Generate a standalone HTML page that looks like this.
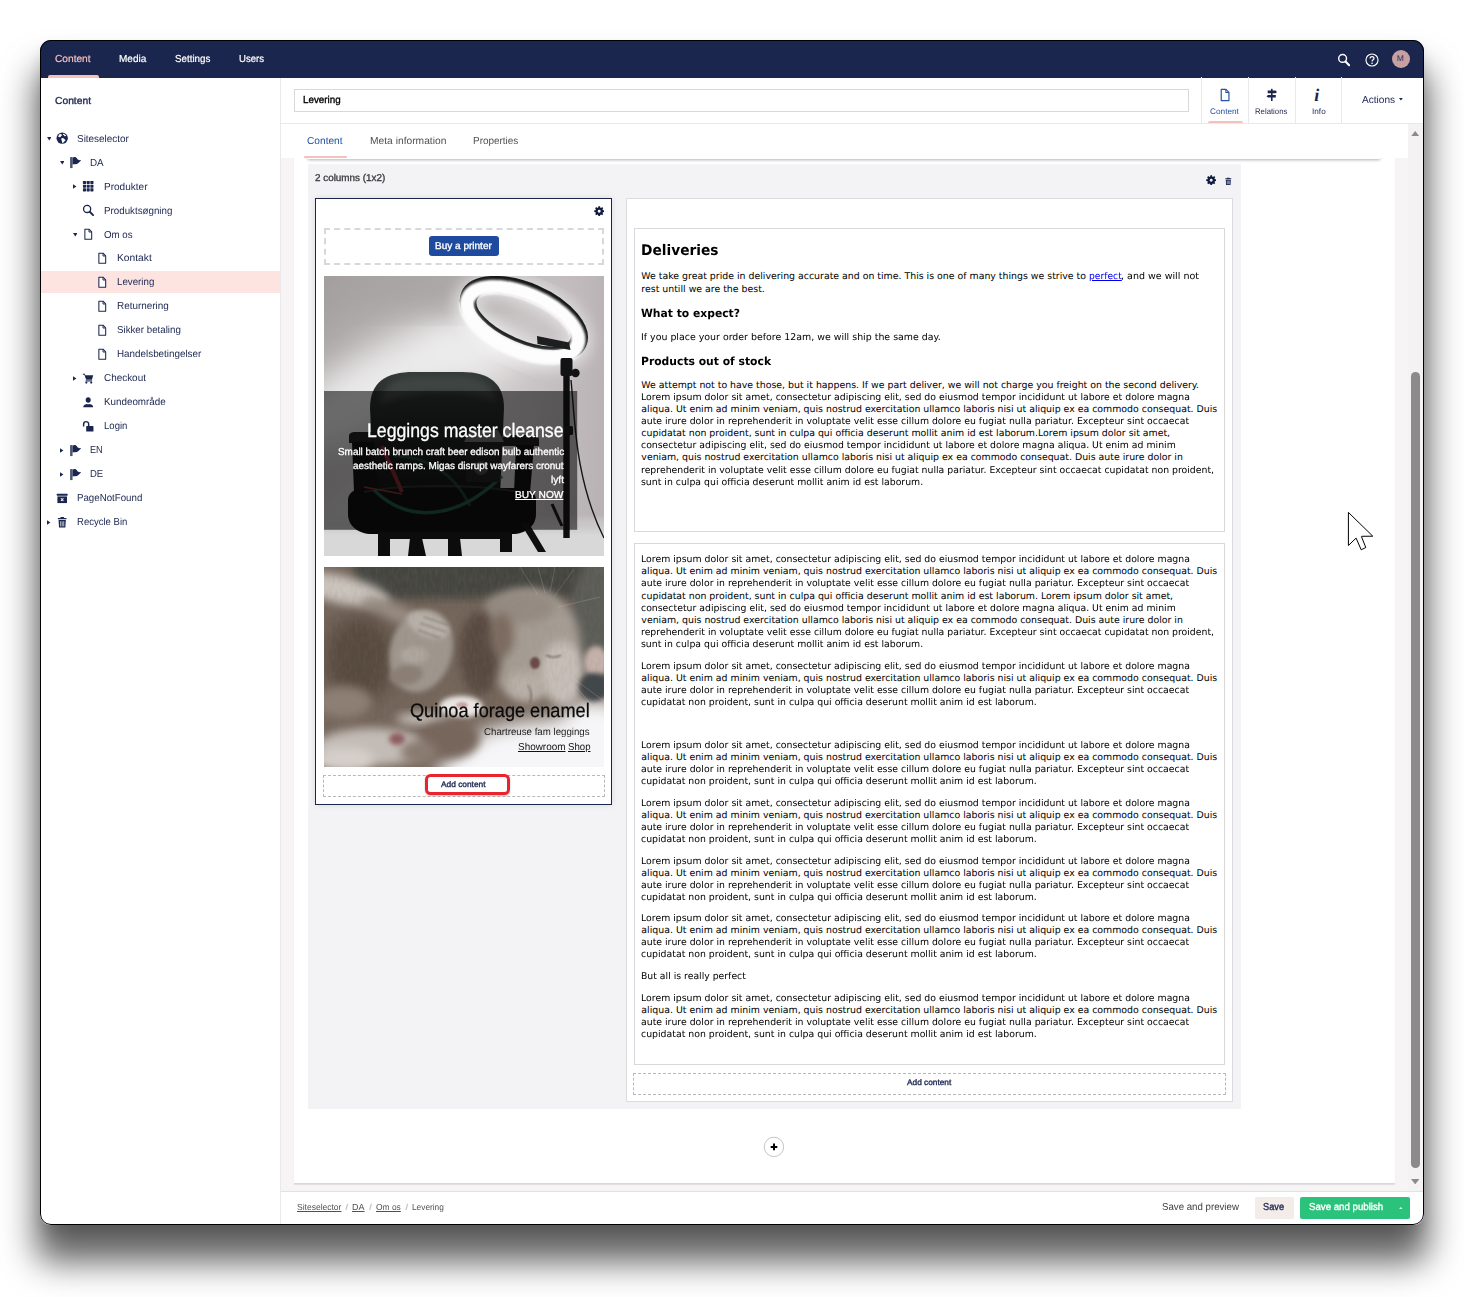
<!DOCTYPE html>
<html lang="en"><head><meta charset="utf-8"><title>Levering - Umbraco</title>
<style>
html,body{margin:0;padding:0;background:#fff}
body{text-rendering:geometricPrecision;width:1464px;height:1297px;position:relative;overflow:hidden;font-family:"Liberation Sans",sans-serif}
.win{position:absolute;left:40px;top:40px;width:1384px;height:1185px;border-radius:11px;box-shadow:0 33px 34px 4px rgba(0,0,0,.62),0 8px 12px rgba(0,0,0,.1);background:#fff}
.clip{position:absolute;left:0;top:0;width:1384px;height:1185px;border-radius:11px;overflow:hidden}
.abs0{position:absolute;left:-40px;top:-40px;width:1464px;height:1297px}
.frame{position:absolute;left:0;top:0;width:1384px;height:1185px;border-radius:11px;box-sizing:border-box;border:1px solid #000;z-index:50;pointer-events:none}
.b{position:absolute;display:block}
.t{position:absolute;white-space:pre;display:block;margin:0;padding:0;transform-origin:0 50%}
</style></head>
<body>
<div class="win"><div class="clip"><div class="abs0">
<div class="b " style="left:40.00px;top:40.00px;width:1384.00px;height:37.60px;background:#1b264f"></div>
<a class="t" style="left:54.89px;top:53.00px;font:normal 400 10.14px/13px 'Liberation Sans', sans-serif;color:#f5c1bc;transform:scaleX(1.0039);-webkit-text-stroke:.2px;">Content</a>
<a class="t" style="left:119.19px;top:53.00px;font:normal 400 10.14px/13px 'Liberation Sans', sans-serif;color:#fff;transform:scaleX(0.9901);-webkit-text-stroke:.2px;">Media</a>
<a class="t" style="left:174.99px;top:53.00px;font:normal 400 10.14px/13px 'Liberation Sans', sans-serif;color:#fff;transform:scaleX(0.9675);-webkit-text-stroke:.2px;">Settings</a>
<a class="t" style="left:238.69px;top:53.00px;font:normal 400 10.14px/13px 'Liberation Sans', sans-serif;color:#fff;transform:scaleX(0.9453);-webkit-text-stroke:.2px;">Users</a>
<div class="b " style="left:48.20px;top:74.90px;width:50.80px;height:2.70px;background:#f5c1bc;border-radius:2px 2px 0 0"></div>
<svg class="b" style="left:1336.80px;top:53.00px;" width="13.60" height="13.60" viewBox="0 0 16 16"><circle cx="6.600" cy="6.400" r="4.600" fill="none" stroke="#fff" stroke-width="1.700"/><path d="M10 10l4.300 4.300" stroke="#fff" stroke-width="2.500" stroke-linecap="round"/></svg>
<svg class="b" style="left:1364.50px;top:52.50px;" width="14.00" height="14.00" viewBox="0 0 16 16"><circle cx="8" cy="8" r="6.900" fill="none" stroke="#fff" stroke-width="1.300"/><path d="M5.800 6.300c0-3 4.500-3 4.500-.2 0 1.700-2.200 1.700-2.200 3.500" fill="none" stroke="#fff" stroke-width="1.400"/><circle cx="8.100" cy="11.700" r=".95" fill="#fff"/></svg>
<div class="b " style="left:1392.00px;top:50.00px;width:18.00px;height:18.00px;background:#c9a0a2;border-radius:50%"></div>
<span class="t" style="left:1396.81px;top:53.00px;font:normal 400 8.38px/11px 'Liberation Sans', sans-serif;color:#2a2f52;">M</span>
<div class="b " style="left:40.00px;top:77.60px;width:240.40px;height:1148.40px;background:#fff"></div>
<span class="t" style="left:54.89px;top:95.00px;font:normal 400 10.14px/13px 'Liberation Sans', sans-serif;color:#1b264f;transform:scaleX(1.0151);-webkit-text-stroke:.34px;">Content</span>
<div class="b " style="left:40.00px;top:270.90px;width:240.40px;height:22.50px;background:#fee4e1"></div>
<svg class="b" style="left:46.60px;top:137.15px;" width="4.60" height="3.40" viewBox="0 0 16 12"><path d="M0 0h16L8 12z" fill="#1b264f"/></svg>
<svg class="b" style="left:55.80px;top:132.35px;" width="12.40" height="12.40" viewBox="0 0 16 16"><circle cx="8" cy="8" r="7.3" fill="#1b264f"/><path d="M4.2 3.2c1.2-.9 2.6-.6 3.4.2.6.7-.3 1.3-1 1.7-.7.5-.3 1.4-1.2 1.7-.9.2-1.5-.5-2.6-.1.1-1.4.6-2.6 1.400-3.500z" fill="#fff"/><path d="M9.200 2.1c1.800.3 3.300 1.400 4.200 2.900-.8.100-1.400.700-2.200.400-.8-.300-.7-1.100-1.500-1.500-.700-.300-1.000-1.000-.500-1.800z" fill="#fff"/><path d="M7.4 8.1c1-.5 2.300-.1 3 .7.800.900 1.900.800 1.700 2-.2 1.100-1.300 1.300-1.900 2.200-.5.800-1.300 1.400-2 .8-.600-.600-.100-1.500-.600-2.300-.600-.900-1.300-2.700-.200-3.400z" fill="#fff"/></svg>
<a class="t" style="left:76.89px;top:133.00px;font:normal 400 10.14px/13px 'Liberation Sans', sans-serif;color:#1b264f;transform:scaleX(0.9811);">Siteselector</a>
<svg class="b" style="left:59.70px;top:161.15px;" width="4.60" height="3.40" viewBox="0 0 16 12"><path d="M0 0h16L8 12z" fill="#1b264f"/></svg>
<svg class="b" style="left:69.10px;top:156.35px;" width="12.40" height="12.40" viewBox="0 0 16 16"><rect x="1.4" y="1.4" width="3.2" height="14.2" fill="#1b264f" opacity=".78"/><path d="M4.6 2.300C7 .6 9.200 1.200 10.600 3.600c1 1.700 2.800 2.100 5.200 1.600-2.400 2.900-4.400 5.500-7.600 5.500-1.500 0-2.400-.5-3.600.2z" fill="#1b264f"/></svg>
<a class="t" style="left:90.49px;top:157.00px;font:normal 400 10.14px/13px 'Liberation Sans', sans-serif;color:#1b264f;transform:scaleX(0.9735);">DA</a>
<svg class="b" style="left:73.40px;top:184.45px;" width="3.40" height="4.80" viewBox="0 0 12 16"><path d="M0 0v16l12-8z" fill="#1b264f"/></svg>
<svg class="b" style="left:82.40px;top:180.35px;" width="12.40" height="12.40" viewBox="0 0 16 16"><rect x="1.2" y="1.2" width="4" height="4" rx=".6" fill="#1b264f"/><rect x="6.0" y="1.2" width="4" height="4" rx=".6" fill="#1b264f"/><rect x="10.8" y="1.2" width="4" height="4" rx=".6" fill="#1b264f"/><rect x="1.2" y="6.0" width="4" height="4" rx=".6" fill="#1b264f"/><rect x="6.0" y="6.0" width="4" height="4" rx=".6" fill="#1b264f"/><rect x="10.8" y="6.0" width="4" height="4" rx=".6" fill="#1b264f"/><rect x="1.2" y="10.8" width="4" height="4" rx=".6" fill="#1b264f"/><rect x="6.0" y="10.8" width="4" height="4" rx=".6" fill="#1b264f"/><rect x="10.8" y="10.8" width="4" height="4" rx=".6" fill="#1b264f"/></svg>
<a class="t" style="left:103.79px;top:181.00px;font:normal 400 10.14px/13px 'Liberation Sans', sans-serif;color:#1b264f;transform:scaleX(0.9909);">Produkter</a>
<svg class="b" style="left:82.40px;top:204.35px;" width="12.40" height="12.40" viewBox="0 0 16 16"><circle cx="6.600" cy="6.400" r="4.600" fill="none" stroke="#1b264f" stroke-width="1.700"/><path d="M10 10l4.300 4.300" stroke="#1b264f" stroke-width="2.500" stroke-linecap="round"/></svg>
<a class="t" style="left:103.79px;top:205.00px;font:normal 400 10.14px/13px 'Liberation Sans', sans-serif;color:#1b264f;transform:scaleX(0.9645);">Produktsøgning</a>
<svg class="b" style="left:72.80px;top:233.15px;" width="4.60" height="3.40" viewBox="0 0 16 12"><path d="M0 0h16L8 12z" fill="#1b264f"/></svg>
<svg class="b" style="left:82.40px;top:228.35px;" width="12.40" height="12.40" viewBox="0 0 16 16"><path d="M3.7 1.6h5.4l3.4 3.4v9.4H3.7z" fill="#fff" stroke="#1b264f" stroke-width="1.35" stroke-linejoin="round"/><path d="M9 1.8v3.4h3.4" fill="none" stroke="#1b264f" stroke-width="1.2"/></svg>
<a class="t" style="left:103.79px;top:229.00px;font:normal 400 10.14px/13px 'Liberation Sans', sans-serif;color:#1b264f;transform:scaleX(0.9557);">Om os</a>
<svg class="b" style="left:95.70px;top:252.35px;" width="12.40" height="12.40" viewBox="0 0 16 16"><path d="M3.7 1.6h5.4l3.4 3.4v9.4H3.7z" fill="#fff" stroke="#1b264f" stroke-width="1.35" stroke-linejoin="round"/><path d="M9 1.8v3.4h3.4" fill="none" stroke="#1b264f" stroke-width="1.2"/></svg>
<a class="t" style="left:116.89px;top:252.00px;font:normal 400 10.14px/13px 'Liberation Sans', sans-serif;color:#1b264f;transform:scaleX(1.0134);">Kontakt</a>
<svg class="b" style="left:95.70px;top:276.35px;" width="12.40" height="12.40" viewBox="0 0 16 16"><path d="M3.7 1.6h5.4l3.4 3.4v9.4H3.7z" fill="#fff" stroke="#1b264f" stroke-width="1.35" stroke-linejoin="round"/><path d="M9 1.8v3.4h3.4" fill="none" stroke="#1b264f" stroke-width="1.2"/></svg>
<a class="t" style="left:116.89px;top:276.00px;font:normal 400 10.14px/13px 'Liberation Sans', sans-serif;color:#1b264f;transform:scaleX(0.9604);">Levering</a>
<svg class="b" style="left:95.70px;top:300.35px;" width="12.40" height="12.40" viewBox="0 0 16 16"><path d="M3.7 1.6h5.4l3.4 3.4v9.4H3.7z" fill="#fff" stroke="#1b264f" stroke-width="1.35" stroke-linejoin="round"/><path d="M9 1.8v3.4h3.4" fill="none" stroke="#1b264f" stroke-width="1.2"/></svg>
<a class="t" style="left:116.89px;top:300.00px;font:normal 400 10.14px/13px 'Liberation Sans', sans-serif;color:#1b264f;transform:scaleX(0.9792);">Returnering</a>
<svg class="b" style="left:95.70px;top:324.35px;" width="12.40" height="12.40" viewBox="0 0 16 16"><path d="M3.7 1.6h5.4l3.4 3.4v9.4H3.7z" fill="#fff" stroke="#1b264f" stroke-width="1.35" stroke-linejoin="round"/><path d="M9 1.8v3.4h3.4" fill="none" stroke="#1b264f" stroke-width="1.2"/></svg>
<a class="t" style="left:116.89px;top:324.00px;font:normal 400 10.14px/13px 'Liberation Sans', sans-serif;color:#1b264f;transform:scaleX(0.9606);">Sikker betaling</a>
<svg class="b" style="left:95.70px;top:348.35px;" width="12.40" height="12.40" viewBox="0 0 16 16"><path d="M3.7 1.6h5.4l3.4 3.4v9.4H3.7z" fill="#fff" stroke="#1b264f" stroke-width="1.35" stroke-linejoin="round"/><path d="M9 1.8v3.4h3.4" fill="none" stroke="#1b264f" stroke-width="1.2"/></svg>
<a class="t" style="left:116.89px;top:348.00px;font:normal 400 10.14px/13px 'Liberation Sans', sans-serif;color:#1b264f;transform:scaleX(0.9725);">Handelsbetingelser</a>
<svg class="b" style="left:73.40px;top:376.45px;" width="3.40" height="4.80" viewBox="0 0 12 16"><path d="M0 0v16l12-8z" fill="#1b264f"/></svg>
<svg class="b" style="left:82.40px;top:372.35px;" width="12.40" height="12.40" viewBox="0 0 16 16"><path d="M1 2.200h2.600l.7 2.100h10.200l-1.700 5.600H5.400L3 3.700H1z" fill="#1b264f"/><path d="M4.600 10.800h8.400v1.400H4.600z" fill="#1b264f"/><circle cx="5.600" cy="13.700" r="1.400" fill="#1b264f"/><circle cx="11.900" cy="13.700" r="1.400" fill="#1b264f"/></svg>
<a class="t" style="left:103.79px;top:372.00px;font:normal 400 10.14px/13px 'Liberation Sans', sans-serif;color:#1b264f;transform:scaleX(0.9795);">Checkout</a>
<svg class="b" style="left:82.40px;top:396.35px;" width="12.40" height="12.40" viewBox="0 0 16 16"><ellipse cx="8" cy="5.200" rx="3.200" ry="3.600" fill="#1b264f"/><path d="M1.600 14.600c0-2.600 2-3.900 4.300-4.400.8.800 3.400.8 4.200 0 2.300.5 4.300 1.800 4.300 4.400z" fill="#1b264f"/></svg>
<a class="t" style="left:103.79px;top:396.00px;font:normal 400 10.14px/13px 'Liberation Sans', sans-serif;color:#1b264f;transform:scaleX(0.9701);">Kundeområde</a>
<svg class="b" style="left:82.40px;top:420.35px;" width="12.40" height="12.40" viewBox="0 0 16 16"><rect x="5.400" y="7.800" width="9.400" height="7.200" rx=".8" fill="#1b264f"/><path d="M2.100 8.300V5.400c0-4.400 6.500-4.400 6.500 0v2.600" fill="none" stroke="#1b264f" stroke-width="1.900"/></svg>
<a class="t" style="left:103.79px;top:420.00px;font:normal 400 10.14px/13px 'Liberation Sans', sans-serif;color:#1b264f;transform:scaleX(0.9445);">Login</a>
<svg class="b" style="left:60.30px;top:448.45px;" width="3.40" height="4.80" viewBox="0 0 12 16"><path d="M0 0v16l12-8z" fill="#1b264f"/></svg>
<svg class="b" style="left:69.10px;top:444.35px;" width="12.40" height="12.40" viewBox="0 0 16 16"><rect x="1.4" y="1.4" width="3.2" height="14.2" fill="#1b264f" opacity=".78"/><path d="M4.6 2.300C7 .6 9.200 1.200 10.600 3.600c1 1.700 2.800 2.100 5.200 1.600-2.400 2.900-4.400 5.500-7.600 5.500-1.500 0-2.400-.5-3.600.2z" fill="#1b264f"/></svg>
<a class="t" style="left:90.49px;top:444.00px;font:normal 400 10.14px/13px 'Liberation Sans', sans-serif;color:#1b264f;transform:scaleX(0.9025);">EN</a>
<svg class="b" style="left:60.30px;top:472.45px;" width="3.40" height="4.80" viewBox="0 0 12 16"><path d="M0 0v16l12-8z" fill="#1b264f"/></svg>
<svg class="b" style="left:69.10px;top:468.35px;" width="12.40" height="12.40" viewBox="0 0 16 16"><rect x="1.4" y="1.4" width="3.2" height="14.2" fill="#1b264f" opacity=".78"/><path d="M4.6 2.300C7 .6 9.200 1.200 10.600 3.600c1 1.700 2.800 2.100 5.200 1.600-2.400 2.900-4.400 5.500-7.600 5.500-1.500 0-2.400-.5-3.600.2z" fill="#1b264f"/></svg>
<a class="t" style="left:90.49px;top:468.00px;font:normal 400 10.14px/13px 'Liberation Sans', sans-serif;color:#1b264f;transform:scaleX(0.9380);">DE</a>
<svg class="b" style="left:55.80px;top:492.35px;" width="12.40" height="12.40" viewBox="0 0 16 16"><rect x="1.100" y="2.300" width="13.800" height="2.600" rx=".5" fill="#1b264f"/><path d="M1.800 5.700h12.400v8.600H1.800z" fill="#1b264f"/><path d="M6.400 8.300l3.200 3.200m0-3.200l-3.200 3.200" stroke="#fff" stroke-width="1.300"/></svg>
<a class="t" style="left:76.89px;top:492.00px;font:normal 400 10.14px/13px 'Liberation Sans', sans-serif;color:#1b264f;transform:scaleX(0.9586);">PageNotFound</a>
<svg class="b" style="left:47.20px;top:520.45px;" width="3.40" height="4.80" viewBox="0 0 12 16"><path d="M0 0v16l12-8z" fill="#1b264f"/></svg>
<svg class="b" style="left:55.80px;top:516.35px;" width="12.40" height="12.40" viewBox="0 0 16 16"><path d="M5.800 1.200h4.400v1.300h3.300v1.800H2.500V2.500h3.300z" fill="#1b264f"/><path d="M3.300 5.200h9.400l-.6 9.800H3.900z" fill="#1b264f"/><path d="M6 6.800v6.600M8 6.800v6.600M10 6.800v6.600" stroke="#fff" stroke-width=".9"/></svg>
<a class="t" style="left:76.89px;top:516.00px;font:normal 400 10.14px/13px 'Liberation Sans', sans-serif;color:#1b264f;transform:scaleX(0.9408);">Recycle Bin</a>
<div class="b " style="left:280.40px;top:77.60px;width:1143.60px;height:1148.40px;background:#f6f4f4"></div>
<div class="b " style="left:280.40px;top:77.60px;width:1.00px;height:1148.40px;background:#e9e9eb"></div>
<div class="b " style="left:281.40px;top:77.60px;width:1142.60px;height:45.60px;background:#fff;border-bottom:1px solid #e9e9eb"></div>
<div class="b " style="left:294.00px;top:89.20px;width:894.50px;height:22.50px;border:1px solid #d8d7d9;background:#fff;box-sizing:border-box"></div>
<span class="t" style="left:303.29px;top:94.00px;font:normal 400 10.14px/13px 'Liberation Sans', sans-serif;color:#000;transform:scaleX(0.9681);-webkit-text-stroke:.34px;">Levering</span>
<div class="b " style="left:1201.30px;top:77.00px;width:1.00px;height:46.20px;background:#e9e9eb"></div>
<div class="b " style="left:1248.30px;top:77.00px;width:1.00px;height:46.20px;background:#e9e9eb"></div>
<div class="b " style="left:1295.40px;top:77.00px;width:1.00px;height:46.20px;background:#e9e9eb"></div>
<div class="b " style="left:1341.30px;top:77.00px;width:1.00px;height:46.20px;background:#e9e9eb"></div>
<svg class="b" style="left:1218.00px;top:88.20px;" width="14.00" height="14.00" viewBox="0 0 16 16"><path d="M3.7 1.6h5.4l3.4 3.4v9.4H3.7z" fill="#fff" stroke="#2152a3" stroke-width="1.35" stroke-linejoin="round"/><path d="M9 1.8v3.4h3.4" fill="none" stroke="#2152a3" stroke-width="1.2"/></svg>
<span class="t" style="left:1210.43px;top:106.00px;font:normal 400 8.09px/11px 'Liberation Sans', sans-serif;color:#2152a3;transform:scaleX(1.0221);">Content</span>
<div class="b " style="left:1208.00px;top:120.60px;width:34.60px;height:2.60px;background:#f5c1bc;border-radius:2px 2px 0 0"></div>
<svg class="b" style="left:1265.25px;top:88.45px;" width="13.50" height="13.50" viewBox="0 0 16 16"><rect x="7.1" y="1" width="1.900" height="14.400" fill="#1b264f"/><path d="M3.200 3h9.200l1.900 1.600-1.900 1.600H3.200z" fill="#1b264f"/><path d="M12.800 8.200H3.600L1.700 9.800l1.900 1.600h9.200z" fill="#1b264f"/></svg>
<span class="t" style="left:1255.43px;top:106.00px;font:normal 400 8.09px/11px 'Liberation Sans', sans-serif;color:#1b264f;transform:scaleX(0.9595);">Relations</span>
<span class="t" style="left:1314.14px;top:85.00px;font:italic 700 18px/20px 'Liberation Serif', serif;color:#1b264f;">i</span>
<span class="t" style="left:1311.53px;top:106.00px;font:normal 400 8.09px/11px 'Liberation Sans', sans-serif;color:#1b264f;transform:scaleX(1.0177);">Info</span>
<span class="t" style="left:1361.99px;top:94.00px;font:normal 400 10.14px/13px 'Liberation Sans', sans-serif;color:#1b264f;transform:scaleX(0.9971);">Actions</span>
<svg class="b" style="left:1399.00px;top:98.40px;" width="3.80" height="2.40" viewBox="0 0 16 10"><path d="M0 0h16L8 10z" fill="#1b264f"/></svg>
<div class="b " style="left:281.40px;top:124.20px;width:1126.60px;height:33.90px;background:#fff;z-index:3"></div>
<div class="b " style="left:306.00px;top:158.10px;width:1076.00px;height:7.90px;overflow:hidden;z-index:3"><div class="b " style="left:2.30px;top:-10.00px;width:1071.70px;height:10.60px;background:#fff;box-shadow:0 1px 3px rgba(0,0,0,.3)"></div></div>
<span class="t" style="left:307.19px;top:135.00px;font:normal 400 10.14px/13px 'Liberation Sans', sans-serif;color:#2152a3;transform:scaleX(1.0039);z-index:4;">Content</span>
<span class="t" style="left:369.59px;top:135.00px;font:normal 400 10.14px/13px 'Liberation Sans', sans-serif;color:#515054;transform:scaleX(1.0130);z-index:4;">Meta information</span>
<span class="t" style="left:472.89px;top:135.00px;font:normal 400 10.14px/13px 'Liberation Sans', sans-serif;color:#515054;transform:scaleX(0.9816);z-index:4;">Properties</span>
<div class="b " style="left:304.10px;top:155.70px;width:42.90px;height:2.40px;background:#f5c1bc;border-radius:1px 1px 0 0;z-index:4"></div>
<div class="b " style="left:294.20px;top:150.00px;width:1100.80px;height:1032.80px;background:#fff;border-bottom:1px solid #d8d7d9;box-shadow:0 1px 1px rgba(0,0,0,.08)"></div>
<div class="b " style="left:308.40px;top:164.40px;width:932.60px;height:944.60px;background:#f3f3f5"></div>
<span class="t" style="left:314.60px;top:173.00px;font:normal 400 9.94px/12px 'Liberation Sans', sans-serif;color:#3c3c40;transform:scaleX(0.9944);-webkit-text-stroke:.34px;">2 columns (1x2)</span>
<svg class="b" style="left:1205.80px;top:174.70px;" width="10.40" height="10.40" viewBox="0 0 16 16"><path d="M15.59 6.68 L15.59 9.32 L13.71 9.47 L13.08 11.00 L14.30 12.43 L12.43 14.30 L11.00 13.08 L9.47 13.71 L9.32 15.59 L6.68 15.59 L6.53 13.71 L5.00 13.08 L3.57 14.30 L1.70 12.43 L2.92 11.00 L2.29 9.47 L0.41 9.32 L0.41 6.68 L2.29 6.53 L2.92 5.00 L1.70 3.57 L3.57 1.70 L5.00 2.92 L6.53 2.29 L6.68 0.41 L9.32 0.41 L9.47 2.29 L11.00 2.92 L12.43 1.70 L14.30 3.57 L13.08 5.00 L13.71 6.53Z M5.70 8.00 a2.30 2.30 0 1 0 4.60 0 a2.30 2.30 0 1 0 -4.60 0Z" fill="#0f1b3d" fill-rule="evenodd"/></svg>
<svg class="b" style="left:1224.20px;top:177.00px;" width="8.60" height="8.60" viewBox="0 0 16 16"><path d="M5.800 1.200h4.400v1.300h3.300v1.800H2.500V2.500h3.300z" fill="#1b264f"/><path d="M3.300 5.200h9.400l-.6 9.800H3.900z" fill="#1b264f"/><path d="M6 6.800v6.600M8 6.800v6.600M10 6.800v6.600" stroke="#fff" stroke-width=".9"/></svg>
<div class="b " style="left:315.00px;top:198.00px;width:297.30px;height:606.60px;background:#fff;border:1px solid #1b264f;box-sizing:border-box;box-shadow:0 0 6px rgba(0,0,0,.1)"></div>
<svg class="b" style="left:593.60px;top:205.80px;" width="10.40" height="10.40" viewBox="0 0 16 16"><path d="M15.59 6.68 L15.59 9.32 L13.71 9.47 L13.08 11.00 L14.30 12.43 L12.43 14.30 L11.00 13.08 L9.47 13.71 L9.32 15.59 L6.68 15.59 L6.53 13.71 L5.00 13.08 L3.57 14.30 L1.70 12.43 L2.92 11.00 L2.29 9.47 L0.41 9.32 L0.41 6.68 L2.29 6.53 L2.92 5.00 L1.70 3.57 L3.57 1.70 L5.00 2.92 L6.53 2.29 L6.68 0.41 L9.32 0.41 L9.47 2.29 L11.00 2.92 L12.43 1.70 L14.30 3.57 L13.08 5.00 L13.71 6.53Z M5.70 8.00 a2.30 2.30 0 1 0 4.60 0 a2.30 2.30 0 1 0 -4.60 0Z" fill="#0f1b3d" fill-rule="evenodd"/></svg>
<div class="b " style="left:324.00px;top:228.00px;width:280.00px;height:37.00px;border:2px dashed #d8d7d9;box-sizing:border-box"></div>
<div class="b " style="left:429.10px;top:236.20px;width:69.80px;height:19.60px;background:#1f4b9e;border-radius:3px"></div>
<span class="t" style="left:435.10px;top:241.00px;font:normal 400 9.94px/12px 'Liberation Sans', sans-serif;color:#ffffff;transform:scaleX(1.0095);-webkit-text-stroke:.34px;">Buy a printer</span>
<svg class="b" style="left:324.00px;top:276.00px;" width="280.00" height="280.00" viewBox="0 0 280 280">
<defs>
<linearGradient id="p1bg" x1="0" y1="0" x2="1" y2="1"><stop offset="0" stop-color="#9f9a9a"/><stop offset=".25" stop-color="#bdb9b9"/><stop offset=".5" stop-color="#d3d0d0"/><stop offset=".8" stop-color="#c6c1c3"/><stop offset="1" stop-color="#b8b1b4"/></linearGradient>
<linearGradient id="p1r" x1="0" y1="0" x2="1" y2="0"><stop offset="0" stop-color="#c2bcbe" stop-opacity="0"/><stop offset="1" stop-color="#b9b2b5" stop-opacity=".95"/></linearGradient>
<linearGradient id="p1back" x1="0" y1="0" x2="0" y2="1"><stop offset="0" stop-color="#363c39"/><stop offset=".2" stop-color="#252927"/><stop offset=".55" stop-color="#151716"/><stop offset="1" stop-color="#0c0c0c"/></linearGradient>
<filter id="bl8" x="-30%" y="-30%" width="160%" height="160%"><feGaussianBlur stdDeviation="7"/></filter>
<filter id="bl3" x="-30%" y="-30%" width="160%" height="160%"><feGaussianBlur stdDeviation="3"/></filter>
<filter id="bl1" x="-30%" y="-30%" width="160%" height="160%"><feGaussianBlur stdDeviation="1"/></filter>
<filter id="bl15" x="-40%" y="-40%" width="180%" height="180%"><feGaussianBlur stdDeviation="16"/></filter>
<clipPath id="p1c"><rect width="280" height="280"/></clipPath>
</defs>
<g clip-path="url(#p1c)">
<rect width="280" height="280" fill="url(#p1bg)"/>
<rect x="150" width="130" height="260" fill="url(#p1r)"/>
<ellipse cx="55" cy="112" rx="120" ry="36" fill="#ebeaea" transform="rotate(-30 55 112)" filter="url(#bl15)"/>
<ellipse cx="150" cy="78" rx="45" ry="22" fill="#efeeee" filter="url(#bl15)"/>
<ellipse cx="90" cy="10" rx="110" ry="22" fill="#a8a3a3" filter="url(#bl15)" opacity=".9"/>
<rect x="-5" y="250" width="290" height="36" fill="#d9d8d9"/>
<rect x="-5" y="243" width="290" height="12" fill="#cbc8c9" filter="url(#bl3)"/>
<g transform="rotate(23.500 199 45)">
<ellipse cx="199" cy="46" rx="60" ry="29" fill="none" stroke="#fff" stroke-width="26" opacity=".5" filter="url(#bl8)"/>
<ellipse cx="199" cy="43" rx="65" ry="33.500" fill="none" stroke="#17181a" stroke-width="6"/>
<ellipse cx="199" cy="43.500" rx="52.500" ry="21.500" fill="none" stroke="#222426" stroke-width="3.500"/>
<ellipse cx="199" cy="46.500" rx="59.500" ry="28.500" fill="none" stroke="#fdfdfd" stroke-width="14.500" filter="url(#bl1)"/>
</g>
<path d="M213 60l32 6.500 1.500 7.500-33-6z" fill="#1d1e20"/>
<rect x="239.300" y="84" width="6.400" height="178" fill="#0e0e10"/>
<rect x="236.500" y="82" width="12" height="18" rx="2" fill="#131315"/>
<circle cx="251.500" cy="97" r="4.200" fill="#131315"/>
<rect x="240" y="150" width="9" height="9" rx="1.500" fill="#151517"/>
<path d="M247 104c4 40 4 100 33 158" fill="none" stroke="#161618" stroke-width="1.400"/>
<path d="M238 250l-10-22" stroke="#141416" stroke-width="3"/>
<path d="M46 132c0-26 16-36 44-36h48c28 0 42 12 42 36l-4 88H50z" fill="url(#p1back)"/>
<path d="M56 128c2-20 16-27 36-27h44c22 0 34 8 36 24-32-12-84-10-116 3z" fill="#454b48" opacity=".75" filter="url(#bl3)"/>
<path d="M25 160c0-3 3-4 6-4h22c3 0 5 2 5 5v6H25z" fill="#1a1b1b"/>
<path d="M28 166h22l4 50H30z" fill="#0b0b0b"/>
<path d="M178 164c0-3 3-5 6-5h26c3 0 5 2 5 5v6h-37z" fill="#171818"/>
<path d="M192 169h18l-4 48h-16z" fill="#0b0b0b"/>
<path d="M24 224c0-8 8-12 18-12h150c12 0 20 4 20 12v14c0 12-10 20-24 20H48c-14 0-24-8-24-20z" fill="#080808"/>
<path d="M40 216c40-8 110-8 156 0" fill="none" stroke="#2a2d2c" stroke-width="2" opacity=".8"/>
<path d="M204 246l18 30h-8l-17-28z" fill="#0f0f0f"/>
<path d="M54 256h134v7H54z" fill="#0c0c0c"/>
<path d="M54 262h12v18H54zM86 262l12 0 4 18H84zM124 262h12l2 18h-14zM176 262h12v14h-12z" fill="#0c0c0c"/>
<path d="M50 214c34 34 84 30 128-14" fill="none" stroke="#1f5c4e" stroke-width="3.500" opacity=".85"/>
<path d="M70 180c30 0 60 16 76 50" fill="none" stroke="#1c4a40" stroke-width="3" opacity=".7"/>
<path d="M40 211l38 7" stroke="#8a2a2e" stroke-width="1.600"/>
<path d="M58 170l20 46" stroke="#7a2428" stroke-width="4"/>
<rect x="142" y="166" width="34" height="40" fill="#1b1b1b"/><circle cx="157" cy="192" r="7" fill="#4a4a48" opacity=".8"/>
<path d="M140 166l6-12h28l6 12z" fill="#8f8f8d" opacity=".7"/>
<rect x="0" y="115" width="253.200" height="138.800" fill="rgba(8,8,8,.56)"/>
</g>
</svg>
<span class="t" style="left:366.83px;top:420.00px;font:normal 400 19.5px/22px 'Liberation Sans', sans-serif;color:#fff;transform:scaleX(0.9063);-webkit-text-stroke:.3px #fff;">Leggings master cleanse</span>
<span class="t" style="left:337.50px;top:446.00px;font:normal 400 10.04px/13px 'Liberation Sans', sans-serif;color:#fff;transform:scaleX(0.9889);-webkit-text-stroke:.3px #fff;">Small batch brunch craft beer edison bulb authentic</span>
<span class="t" style="left:353.00px;top:460.00px;font:normal 400 10.04px/13px 'Liberation Sans', sans-serif;color:#fff;transform:scaleX(0.9889);-webkit-text-stroke:.3px #fff;">aesthetic ramps. Migas disrupt wayfarers cronut</span>
<span class="t" style="left:550.60px;top:474.00px;font:normal 400 10.04px/13px 'Liberation Sans', sans-serif;color:#fff;transform:scaleX(1.0135);-webkit-text-stroke:.3px #fff;">lyft</span>
<a class="t" style="left:515.20px;top:489.00px;font:normal 400 10.04px/13px 'Liberation Sans', sans-serif;color:#fff;transform:scaleX(1.0136);-webkit-text-stroke:.3px #fff;text-decoration:underline;">BUY NOW</a>
<svg class="b" style="left:324.00px;top:567.00px;" width="280.00" height="200.00" viewBox="0 0 280 200">
<defs>
<filter id="c12" x="-40%" y="-40%" width="180%" height="180%"><feGaussianBlur stdDeviation="10"/></filter>
<filter id="c6" x="-40%" y="-40%" width="180%" height="180%"><feGaussianBlur stdDeviation="5"/></filter>
<filter id="c3" x="-40%" y="-40%" width="180%" height="180%"><feGaussianBlur stdDeviation="2.500"/></filter>
<filter id="c1" x="-40%" y="-40%" width="180%" height="180%"><feGaussianBlur stdDeviation="1.200"/></filter>
<filter id="fur" x="0" y="0" width="100%" height="100%"><feTurbulence type="fractalNoise" baseFrequency=".35 .12" numOctaves="2" seed="4" result="n"/><feColorMatrix in="n" type="matrix" values="0 0 0 0 .25  0 0 0 0 .22  0 0 0 0 .2  .9 0 0 0 -.32"/></filter>
<clipPath id="cc"><rect width="280" height="200"/></clipPath>
</defs>
<g clip-path="url(#cc)">
<rect width="280" height="200" fill="#74655a"/>
<rect x="30" y="-30" width="280" height="62" fill="#45453f" filter="url(#c6)"/>
<ellipse cx="280" cy="55" rx="34" ry="70" fill="#5b5c57" filter="url(#c6)"/>
<ellipse cx="18" cy="24" rx="48" ry="14" fill="#cbc4bd" filter="url(#c6)" transform="rotate(14 22 26)"/>
<ellipse cx="66" cy="44" rx="30" ry="9" fill="#9a8e84" filter="url(#c6)" transform="rotate(22 66 44)"/>
<ellipse cx="36" cy="92" rx="36" ry="44" fill="#57483e" filter="url(#c12)"/>
<ellipse cx="20" cy="135" rx="28" ry="16" fill="#8d7f73" filter="url(#c6)"/>
<ellipse cx="206" cy="76" rx="50" ry="54" fill="#a69d94" filter="url(#c6)"/>
<ellipse cx="196" cy="40" rx="36" ry="17" fill="#958b82" filter="url(#c6)"/>
<ellipse cx="238" cy="106" rx="22" ry="32" fill="#c6beb7" filter="url(#c6)"/>
<ellipse cx="202" cy="120" rx="20" ry="15" fill="#b9b0a8" filter="url(#c6)"/>
<ellipse cx="156" cy="86" rx="21" ry="42" fill="#594a3f" filter="url(#c6)"/>
<ellipse cx="178" cy="68" rx="12" ry="22" fill="#7b6b5f" filter="url(#c6)"/>
<ellipse cx="272" cy="95" rx="12" ry="16" fill="#c6b3ab" filter="url(#c3)"/>
<ellipse cx="97" cy="84" rx="31" ry="42" fill="#9f978e" filter="url(#c3)" transform="rotate(16 97 84)"/>
<ellipse cx="104" cy="58" rx="22" ry="12" fill="#b8b1a9" filter="url(#c3)" transform="rotate(22 104 58)"/>
<ellipse cx="82" cy="108" rx="17" ry="10" fill="#8b7f75" filter="url(#c3)" transform="rotate(-10 82 108)"/>
<ellipse cx="90" cy="88" rx="14" ry="8" fill="#afa79f" filter="url(#c3)"/>
<path d="M100 50l24 8M96 56l26 9M94 63l22 8" stroke="#5e544b" stroke-width="1.200" opacity=".6" filter="url(#c1)"/>
<rect width="280" height="200" filter="url(#fur)" opacity=".3"/>
<ellipse cx="232" cy="212" rx="118" ry="60" fill="#f6f6f8" filter="url(#c12)"/>
<ellipse cx="272" cy="166" rx="36" ry="34" fill="#f6f6f8" filter="url(#c12)"/>
<ellipse cx="270" cy="120" rx="15" ry="14" fill="#43464a" filter="url(#c3)"/>
<ellipse cx="48" cy="180" rx="56" ry="19" fill="#c2bbb6" filter="url(#c6)"/>
<ellipse cx="20" cy="192" rx="30" ry="12" fill="#d5cfcb" filter="url(#c6)"/>
<ellipse cx="137" cy="140" rx="22" ry="11" fill="#e9e5e2" filter="url(#c3)"/>
<ellipse cx="100" cy="152" rx="28" ry="6" fill="#c6bfb9" filter="url(#c6)"/>
<ellipse cx="126" cy="172" rx="30" ry="20" fill="#77665b" filter="url(#c6)"/>
<ellipse cx="95" cy="185" rx="18" ry="12" fill="#8a7a70" filter="url(#c6)"/>
<ellipse cx="73" cy="172" rx="8" ry="6" fill="#8d5c5f" filter="url(#c3)"/>
<ellipse cx="138" cy="138" rx="6" ry="3" fill="#c9a5a6" filter="url(#c1)"/>
<ellipse cx="211" cy="96" rx="5" ry="6" fill="#6a4a49" filter="url(#c1)"/>
<path d="M222 88c5 3 10 3 15 0" stroke="#5d5048" stroke-width="1.200" fill="none" filter="url(#c1)"/>
<path d="M204 118c4 6 4 12 2 18" stroke="#6d6058" stroke-width="1.200" fill="none" filter="url(#c1)"/>
<path d="M196 0l18 28M214 0l7 26M231 0l-5 25M250 2l-20 28M276 30l-42 10" stroke="#deded9" stroke-width=".5" opacity=".38" fill="none"/>
<path d="M250 112l30 22M252 120l26 30" stroke="#e8e8e6" stroke-width=".5" opacity=".4" fill="none"/>
</g>
</svg>
<span class="t" style="left:409.83px;top:700.00px;font:normal 400 19.5px/22px 'Liberation Sans', sans-serif;color:#0a0a0a;transform:scaleX(0.9311);-webkit-text-stroke:.25px #0a0a0a;">Quinoa forage enamel</span>
<span class="t" style="left:484.20px;top:726.00px;font:normal 400 10.04px/13px 'Liberation Sans', sans-serif;color:#222;transform:scaleX(0.9662);">Chartreuse fam leggings</span>
<a class="t" style="left:517.50px;top:741.00px;font:normal 400 10.04px/13px 'Liberation Sans', sans-serif;color:#111;transform:scaleX(0.9906);text-decoration:underline;">Showroom</a>
<a class="t" style="left:567.60px;top:741.00px;font:normal 400 10.04px/13px 'Liberation Sans', sans-serif;color:#111;transform:scaleX(0.9601);text-decoration:underline;">Shop</a>
<div class="b " style="left:323.00px;top:774.80px;width:282.00px;height:21.80px;border:1px dashed #b8b8bc;box-sizing:border-box"></div>
<div class="b " style="left:425.30px;top:773.60px;width:84.70px;height:21.20px;border:3.8px solid #e9242c;border-radius:5.5px;box-sizing:border-box;box-shadow:0 1px 2px rgba(0,0,0,.25)"></div>
<span class="t" style="left:441.43px;top:779.00px;font:normal 400 8.19px/11px 'Liberation Sans', sans-serif;color:#1b264f;transform:scaleX(1.0207);-webkit-text-stroke:.34px;">Add content</span>
<div class="b " style="left:626.30px;top:198.00px;width:606.30px;height:903.80px;background:#fff;border:1px solid #dcdcde;box-sizing:border-box"></div>
<div class="b " style="left:634.10px;top:228.20px;width:590.90px;height:303.80px;border:1px solid #d8d7d9;box-sizing:border-box;background:#fff"></div>
<h1 class="t" style="left:641.38px;top:242.00px;font:normal 700 14.6px/17px 'DejaVu Sans', 'Liberation Sans', sans-serif;color:#000;transform:scaleX(0.9424);">Deliveries</h1>
<span class="t" style="left:641.34px;top:271.00px;font:normal 400 9.4px/12px 'DejaVu Sans', 'Liberation Sans', sans-serif;color:#000;">We take great pride in delivering accurate and on time. This is one of many things we strive to </span>
<a class="t" style="left:1088.84px;top:271.00px;font:normal 400 9.4px/12px 'DejaVu Sans', 'Liberation Sans', sans-serif;color:#0000ee;transform:scaleX(0.9788);text-decoration:underline;">perfect</a>
<span class="t" style="left:1121.34px;top:271.00px;font:normal 400 9.4px/12px 'DejaVu Sans', 'Liberation Sans', sans-serif;color:#000;transform:scaleX(1.0151);">, and we will not</span>
<span class="t" style="left:641.34px;top:284.00px;font:normal 400 9.4px/12px 'DejaVu Sans', 'Liberation Sans', sans-serif;color:#000;">rest untill we are the best.</span>
<h2 class="t" style="left:641.42px;top:307.00px;font:normal 700 11.2px/14px 'DejaVu Sans', 'Liberation Sans', sans-serif;color:#000;transform:scaleX(0.9615);">What to expect?</h2>
<span class="t" style="left:641.34px;top:332.00px;font:normal 400 9.4px/12px 'DejaVu Sans', 'Liberation Sans', sans-serif;color:#000;transform:scaleX(1.0045);">If you place your order before 12am, we will ship the same day.</span>
<h2 class="t" style="left:641.42px;top:355.00px;font:normal 700 11.2px/14px 'DejaVu Sans', 'Liberation Sans', sans-serif;color:#000;transform:scaleX(0.9632);">Products out of stock</h2>
<span class="t" style="left:641.34px;top:380.00px;font:normal 400 9.4px/12px 'DejaVu Sans', 'Liberation Sans', sans-serif;color:#000;">We attempt not to have those, but it happens. If we part deliver, we will not charge you freight on the second delivery.</span>
<span class="t" style="left:641.34px;top:392.00px;font:normal 400 9.4px/12px 'DejaVu Sans', 'Liberation Sans', sans-serif;color:#000;transform:scaleX(0.9968);">Lorem ipsum dolor sit amet, consectetur adipiscing elit, sed do eiusmod tempor incididunt ut labore et dolore magna</span>
<span class="t" style="left:641.34px;top:404.00px;font:normal 400 9.4px/12px 'DejaVu Sans', 'Liberation Sans', sans-serif;color:#000;">aliqua. Ut enim ad minim veniam, quis nostrud exercitation ullamco laboris nisi ut aliquip ex ea commodo consequat. Duis</span>
<span class="t" style="left:641.34px;top:416.00px;font:normal 400 9.4px/12px 'DejaVu Sans', 'Liberation Sans', sans-serif;color:#000;transform:scaleX(0.9957);">aute irure dolor in reprehenderit in voluptate velit esse cillum dolore eu fugiat nulla pariatur. Excepteur sint occaecat</span>
<span class="t" style="left:641.34px;top:428.00px;font:normal 400 9.4px/12px 'DejaVu Sans', 'Liberation Sans', sans-serif;color:#000;">cupidatat non proident, sunt in culpa qui officia deserunt mollit anim id est laborum.Lorem ipsum dolor sit amet,</span>
<span class="t" style="left:641.34px;top:440.00px;font:normal 400 9.4px/12px 'DejaVu Sans', 'Liberation Sans', sans-serif;color:#000;transform:scaleX(0.9955);">consectetur adipiscing elit, sed do eiusmod tempor incididunt ut labore et dolore magna aliqua. Ut enim ad minim</span>
<span class="t" style="left:641.34px;top:452.00px;font:normal 400 9.4px/12px 'DejaVu Sans', 'Liberation Sans', sans-serif;color:#000;">veniam, quis nostrud exercitation ullamco laboris nisi ut aliquip ex ea commodo consequat. Duis aute irure dolor in</span>
<span class="t" style="left:641.34px;top:465.00px;font:normal 400 9.4px/12px 'DejaVu Sans', 'Liberation Sans', sans-serif;color:#000;transform:scaleX(0.9942);">reprehenderit in voluptate velit esse cillum dolore eu fugiat nulla pariatur. Excepteur sint occaecat cupidatat non proident,</span>
<span class="t" style="left:641.34px;top:477.00px;font:normal 400 9.4px/12px 'DejaVu Sans', 'Liberation Sans', sans-serif;color:#000;transform:scaleX(0.9957);">sunt in culpa qui officia deserunt mollit anim id est laborum.</span>
<div class="b " style="left:634.10px;top:543.20px;width:590.90px;height:522.00px;border:1px solid #d8d7d9;box-sizing:border-box;background:#fff"></div>
<span class="t" style="left:641.34px;top:554.00px;font:normal 400 9.4px/12px 'DejaVu Sans', 'Liberation Sans', sans-serif;color:#000;transform:scaleX(0.9968);">Lorem ipsum dolor sit amet, consectetur adipiscing elit, sed do eiusmod tempor incididunt ut labore et dolore magna</span>
<span class="t" style="left:641.34px;top:566.00px;font:normal 400 9.4px/12px 'DejaVu Sans', 'Liberation Sans', sans-serif;color:#000;">aliqua. Ut enim ad minim veniam, quis nostrud exercitation ullamco laboris nisi ut aliquip ex ea commodo consequat. Duis</span>
<span class="t" style="left:641.34px;top:578.00px;font:normal 400 9.4px/12px 'DejaVu Sans', 'Liberation Sans', sans-serif;color:#000;transform:scaleX(0.9957);">aute irure dolor in reprehenderit in voluptate velit esse cillum dolore eu fugiat nulla pariatur. Excepteur sint occaecat</span>
<span class="t" style="left:641.34px;top:591.00px;font:normal 400 9.4px/12px 'DejaVu Sans', 'Liberation Sans', sans-serif;color:#000;">cupidatat non proident, sunt in culpa qui officia deserunt mollit anim id est laborum. Lorem ipsum dolor sit amet,</span>
<span class="t" style="left:641.34px;top:603.00px;font:normal 400 9.4px/12px 'DejaVu Sans', 'Liberation Sans', sans-serif;color:#000;transform:scaleX(0.9955);">consectetur adipiscing elit, sed do eiusmod tempor incididunt ut labore et dolore magna aliqua. Ut enim ad minim</span>
<span class="t" style="left:641.34px;top:615.00px;font:normal 400 9.4px/12px 'DejaVu Sans', 'Liberation Sans', sans-serif;color:#000;">veniam, quis nostrud exercitation ullamco laboris nisi ut aliquip ex ea commodo consequat. Duis aute irure dolor in</span>
<span class="t" style="left:641.34px;top:627.00px;font:normal 400 9.4px/12px 'DejaVu Sans', 'Liberation Sans', sans-serif;color:#000;transform:scaleX(0.9942);">reprehenderit in voluptate velit esse cillum dolore eu fugiat nulla pariatur. Excepteur sint occaecat cupidatat non proident,</span>
<span class="t" style="left:641.34px;top:639.00px;font:normal 400 9.4px/12px 'DejaVu Sans', 'Liberation Sans', sans-serif;color:#000;transform:scaleX(0.9957);">sunt in culpa qui officia deserunt mollit anim id est laborum.</span>
<span class="t" style="left:641.34px;top:661.00px;font:normal 400 9.4px/12px 'DejaVu Sans', 'Liberation Sans', sans-serif;color:#000;transform:scaleX(0.9968);">Lorem ipsum dolor sit amet, consectetur adipiscing elit, sed do eiusmod tempor incididunt ut labore et dolore magna</span>
<span class="t" style="left:641.34px;top:673.00px;font:normal 400 9.4px/12px 'DejaVu Sans', 'Liberation Sans', sans-serif;color:#000;">aliqua. Ut enim ad minim veniam, quis nostrud exercitation ullamco laboris nisi ut aliquip ex ea commodo consequat. Duis</span>
<span class="t" style="left:641.34px;top:685.00px;font:normal 400 9.4px/12px 'DejaVu Sans', 'Liberation Sans', sans-serif;color:#000;transform:scaleX(0.9957);">aute irure dolor in reprehenderit in voluptate velit esse cillum dolore eu fugiat nulla pariatur. Excepteur sint occaecat</span>
<span class="t" style="left:641.34px;top:697.00px;font:normal 400 9.4px/12px 'DejaVu Sans', 'Liberation Sans', sans-serif;color:#000;transform:scaleX(0.9978);">cupidatat non proident, sunt in culpa qui officia deserunt mollit anim id est laborum.</span>
<span class="t" style="left:641.34px;top:740.00px;font:normal 400 9.4px/12px 'DejaVu Sans', 'Liberation Sans', sans-serif;color:#000;transform:scaleX(0.9968);">Lorem ipsum dolor sit amet, consectetur adipiscing elit, sed do eiusmod tempor incididunt ut labore et dolore magna</span>
<span class="t" style="left:641.34px;top:752.00px;font:normal 400 9.4px/12px 'DejaVu Sans', 'Liberation Sans', sans-serif;color:#000;">aliqua. Ut enim ad minim veniam, quis nostrud exercitation ullamco laboris nisi ut aliquip ex ea commodo consequat. Duis</span>
<span class="t" style="left:641.34px;top:764.00px;font:normal 400 9.4px/12px 'DejaVu Sans', 'Liberation Sans', sans-serif;color:#000;transform:scaleX(0.9957);">aute irure dolor in reprehenderit in voluptate velit esse cillum dolore eu fugiat nulla pariatur. Excepteur sint occaecat</span>
<span class="t" style="left:641.34px;top:776.00px;font:normal 400 9.4px/12px 'DejaVu Sans', 'Liberation Sans', sans-serif;color:#000;transform:scaleX(0.9978);">cupidatat non proident, sunt in culpa qui officia deserunt mollit anim id est laborum.</span>
<span class="t" style="left:641.34px;top:798.00px;font:normal 400 9.4px/12px 'DejaVu Sans', 'Liberation Sans', sans-serif;color:#000;transform:scaleX(0.9968);">Lorem ipsum dolor sit amet, consectetur adipiscing elit, sed do eiusmod tempor incididunt ut labore et dolore magna</span>
<span class="t" style="left:641.34px;top:810.00px;font:normal 400 9.4px/12px 'DejaVu Sans', 'Liberation Sans', sans-serif;color:#000;">aliqua. Ut enim ad minim veniam, quis nostrud exercitation ullamco laboris nisi ut aliquip ex ea commodo consequat. Duis</span>
<span class="t" style="left:641.34px;top:822.00px;font:normal 400 9.4px/12px 'DejaVu Sans', 'Liberation Sans', sans-serif;color:#000;transform:scaleX(0.9957);">aute irure dolor in reprehenderit in voluptate velit esse cillum dolore eu fugiat nulla pariatur. Excepteur sint occaecat</span>
<span class="t" style="left:641.34px;top:834.00px;font:normal 400 9.4px/12px 'DejaVu Sans', 'Liberation Sans', sans-serif;color:#000;transform:scaleX(0.9978);">cupidatat non proident, sunt in culpa qui officia deserunt mollit anim id est laborum.</span>
<span class="t" style="left:641.34px;top:856.00px;font:normal 400 9.4px/12px 'DejaVu Sans', 'Liberation Sans', sans-serif;color:#000;transform:scaleX(0.9968);">Lorem ipsum dolor sit amet, consectetur adipiscing elit, sed do eiusmod tempor incididunt ut labore et dolore magna</span>
<span class="t" style="left:641.34px;top:868.00px;font:normal 400 9.4px/12px 'DejaVu Sans', 'Liberation Sans', sans-serif;color:#000;">aliqua. Ut enim ad minim veniam, quis nostrud exercitation ullamco laboris nisi ut aliquip ex ea commodo consequat. Duis</span>
<span class="t" style="left:641.34px;top:880.00px;font:normal 400 9.4px/12px 'DejaVu Sans', 'Liberation Sans', sans-serif;color:#000;transform:scaleX(0.9957);">aute irure dolor in reprehenderit in voluptate velit esse cillum dolore eu fugiat nulla pariatur. Excepteur sint occaecat</span>
<span class="t" style="left:641.34px;top:892.00px;font:normal 400 9.4px/12px 'DejaVu Sans', 'Liberation Sans', sans-serif;color:#000;transform:scaleX(0.9978);">cupidatat non proident, sunt in culpa qui officia deserunt mollit anim id est laborum.</span>
<span class="t" style="left:641.34px;top:913.00px;font:normal 400 9.4px/12px 'DejaVu Sans', 'Liberation Sans', sans-serif;color:#000;transform:scaleX(0.9968);">Lorem ipsum dolor sit amet, consectetur adipiscing elit, sed do eiusmod tempor incididunt ut labore et dolore magna</span>
<span class="t" style="left:641.34px;top:925.00px;font:normal 400 9.4px/12px 'DejaVu Sans', 'Liberation Sans', sans-serif;color:#000;">aliqua. Ut enim ad minim veniam, quis nostrud exercitation ullamco laboris nisi ut aliquip ex ea commodo consequat. Duis</span>
<span class="t" style="left:641.34px;top:937.00px;font:normal 400 9.4px/12px 'DejaVu Sans', 'Liberation Sans', sans-serif;color:#000;transform:scaleX(0.9957);">aute irure dolor in reprehenderit in voluptate velit esse cillum dolore eu fugiat nulla pariatur. Excepteur sint occaecat</span>
<span class="t" style="left:641.34px;top:949.00px;font:normal 400 9.4px/12px 'DejaVu Sans', 'Liberation Sans', sans-serif;color:#000;transform:scaleX(0.9978);">cupidatat non proident, sunt in culpa qui officia deserunt mollit anim id est laborum.</span>
<span class="t" style="left:641.34px;top:971.00px;font:normal 400 9.4px/12px 'DejaVu Sans', 'Liberation Sans', sans-serif;color:#000;transform:scaleX(0.9911);">But all is really perfect</span>
<span class="t" style="left:641.34px;top:993.00px;font:normal 400 9.4px/12px 'DejaVu Sans', 'Liberation Sans', sans-serif;color:#000;transform:scaleX(0.9968);">Lorem ipsum dolor sit amet, consectetur adipiscing elit, sed do eiusmod tempor incididunt ut labore et dolore magna</span>
<span class="t" style="left:641.34px;top:1005.00px;font:normal 400 9.4px/12px 'DejaVu Sans', 'Liberation Sans', sans-serif;color:#000;">aliqua. Ut enim ad minim veniam, quis nostrud exercitation ullamco laboris nisi ut aliquip ex ea commodo consequat. Duis</span>
<span class="t" style="left:641.34px;top:1017.00px;font:normal 400 9.4px/12px 'DejaVu Sans', 'Liberation Sans', sans-serif;color:#000;transform:scaleX(0.9957);">aute irure dolor in reprehenderit in voluptate velit esse cillum dolore eu fugiat nulla pariatur. Excepteur sint occaecat</span>
<span class="t" style="left:641.34px;top:1029.00px;font:normal 400 9.4px/12px 'DejaVu Sans', 'Liberation Sans', sans-serif;color:#000;transform:scaleX(0.9978);">cupidatat non proident, sunt in culpa qui officia deserunt mollit anim id est laborum.</span>
<div class="b " style="left:633.30px;top:1073.40px;width:592.70px;height:21.80px;border:1px dashed #b8b8bc;box-sizing:border-box"></div>
<span class="t" style="left:906.83px;top:1077.00px;font:normal 400 8.19px/11px 'Liberation Sans', sans-serif;color:#1b264f;transform:scaleX(1.0138);-webkit-text-stroke:.34px;">Add content</span>
<svg class="b" style="left:762.00px;top:1135.00px;" width="24.00" height="24.00" viewBox="0 0 24 24"><circle cx="11.950" cy="11.900" r="9.700" fill="#fff" stroke="#c4c4ce" stroke-width="1"/><path d="M8.700 11.900h6.600M12 8.600v6.600" stroke="#000" stroke-width="2"/></svg>
<div class="b " style="left:1408.00px;top:124.20px;width:16.00px;height:1066.40px;background:#f4f2f2;z-index:5"></div>
<svg class="b" style="left:1411.20px;top:130.60px;z-index:6" width="8.40" height="5.40" viewBox="0 0 16 10"><path d="M8 0l8 10H0z" fill="#8b8b8b"/></svg>
<svg class="b" style="left:1411.20px;top:1179.00px;z-index:6" width="8.40" height="5.40" viewBox="0 0 16 10"><path d="M0 0h16L8 10z" fill="#8b8b8b"/></svg>
<div class="b " style="left:1411.00px;top:372.00px;width:8.60px;height:795.50px;background:#8b8b8b;border-radius:4.3px;z-index:6"></div>
<div class="b " style="left:281.40px;top:1190.60px;width:1142.60px;height:35.40px;background:#fff;border-top:1px solid #e3e1e1;z-index:6"></div>
<a class="t" style="left:296.69px;top:1202.00px;font:normal 400 8.78px/11px 'Liberation Sans', sans-serif;color:#515054;transform:scaleX(0.9703);z-index:7;text-decoration:underline;">Siteselector</a>
<span class="t" style="left:345.59px;top:1202.00px;font:normal 400 8.78px/11px 'Liberation Sans', sans-serif;color:#9a9a9e;z-index:7;">/</span>
<a class="t" style="left:352.19px;top:1202.00px;font:normal 400 8.78px/11px 'Liberation Sans', sans-serif;color:#515054;transform:scaleX(1.0298);z-index:7;text-decoration:underline;">DA</a>
<span class="t" style="left:369.19px;top:1202.00px;font:normal 400 8.78px/11px 'Liberation Sans', sans-serif;color:#9a9a9e;z-index:7;">/</span>
<a class="t" style="left:375.79px;top:1202.00px;font:normal 400 8.78px/11px 'Liberation Sans', sans-serif;color:#515054;transform:scaleX(0.9622);z-index:7;text-decoration:underline;">Om os</a>
<span class="t" style="left:405.49px;top:1202.00px;font:normal 400 8.78px/11px 'Liberation Sans', sans-serif;color:#9a9a9e;z-index:7;">/</span>
<span class="t" style="left:412.09px;top:1202.00px;font:normal 400 8.78px/11px 'Liberation Sans', sans-serif;color:#515054;transform:scaleX(0.9472);z-index:7;">Levering</span>
<span class="t" style="left:1161.99px;top:1201.00px;font:normal 400 10.14px/13px 'Liberation Sans', sans-serif;color:#3c3c40;transform:scaleX(0.9553);z-index:7;">Save and preview</span>
<div class="b " style="left:1255.00px;top:1197.10px;width:39.00px;height:21.60px;background:#f3ece9;border-radius:2px;z-index:7"></div>
<span class="t" style="left:1263.39px;top:1201.00px;font:normal 400 10.14px/13px 'Liberation Sans', sans-serif;color:#1b264f;transform:scaleX(0.9102);z-index:7;-webkit-text-stroke:.34px;">Save</span>
<div class="b " style="left:1300.00px;top:1197.10px;width:110.00px;height:21.60px;background:#2bc37c;border-radius:2px;z-index:7"></div>
<span class="t" style="left:1308.89px;top:1201.00px;font:normal 400 10.14px/13px 'Liberation Sans', sans-serif;color:#ffffff;transform:scaleX(0.9552);z-index:7;-webkit-text-stroke:.34px;">Save and publish</span>
<svg class="b" style="left:1399.00px;top:1207.30px;z-index:8" width="3.60" height="2.20" viewBox="0 0 16 10"><path d="M8 0l8 10H0z" fill="#fff"/></svg>
<svg class="b" style="left:1340.00px;top:505.00px;z-index:20" width="40.00" height="50.00" viewBox="1340 505 40 50"><path d="M1348.400 512.400V545.500l7.700-7.400 5.100 11.700 4.600-2.300-4.400-11 .2-.2 11.200-.1z" fill="#fff" stroke="#000" stroke-width="1" stroke-linejoin="round"/></svg>
</div></div><div class="frame"></div></div>
</body></html>
